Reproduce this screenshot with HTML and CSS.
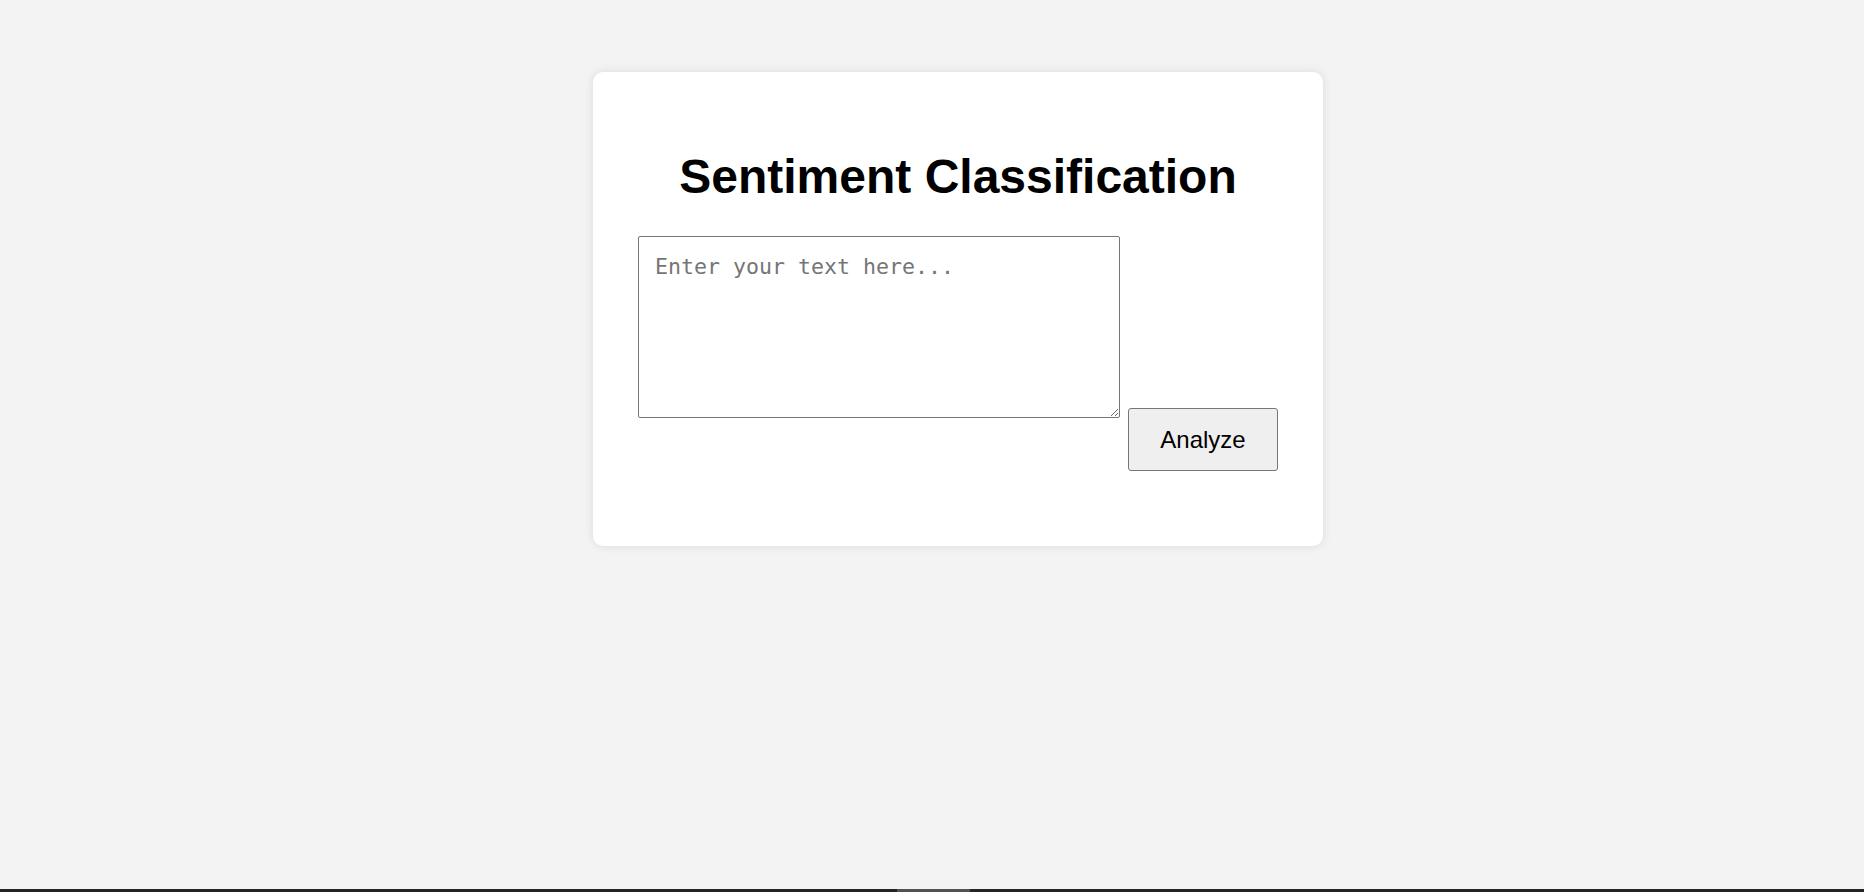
FILE: index.html
```html
<!DOCTYPE html>
<html lang="en">
<head>
<meta charset="utf-8">
<title>Sentiment Classification</title>
<link rel="stylesheet" href="styles.css">
</head>
<body>
<main class="page">
  <section class="card">
    <h1 class="title">Sentiment Classification</h1>
    <form class="form-row">
      <textarea class="text-input" placeholder="Enter your text here..."></textarea>
      <button type="button" class="analyze-btn">Analyze</button>
    </form>
  </section>
</main>
<div class="taskbar-edge"><span class="taskbar-seg"></span></div>
</body>
</html>
```
FILE: styles.css
```css
html, body {
  margin: 0;
  padding: 0;
  height: 100%;
}

body {
  background: #f3f3f3;
  font-family: "Liberation Sans", Arial, sans-serif;
  display: flex;
  flex-direction: column;
  overflow: hidden;
}

.page {
  flex: 1;
  display: flex;
  justify-content: center;
  align-items: flex-start;
  padding: 72px 0 0 52px;
}

.card {
  box-sizing: border-box;
  width: 730px;
  height: 474px;
  background: #ffffff;
  border-radius: 10px;
  box-shadow: 0 0 10px rgba(0, 0, 0, 0.1);
  padding: 40px 40px 0;
  display: flex;
  flex-direction: column;
  align-items: center;
}

.title {
  margin: 37px 0 32px;
  font-size: 48px;
  font-weight: bold;
  line-height: 55px;
  color: #000;
  text-align: center;
}

.form-row {
  margin: 0;
  display: flex;
  align-items: flex-start;
  gap: 8px;
}

.text-input {
  box-sizing: border-box;
  width: 482px;
  height: 182px;
  padding: 17px 16px 16px;
  border: 1px solid #767676;
  border-radius: 2px;
  font-family: "DejaVu Sans Mono", monospace;
  font-size: 21.6px;
  color: #000;
  background: #fff;
  resize: both;
}

.text-input::placeholder {
  color: #757575;
}

.analyze-btn {
  box-sizing: border-box;
  margin-top: 172px;
  width: 150px;
  height: 63px;
  padding: 0;
  background: #efefef;
  border: 1px solid #767676;
  border-radius: 3px;
  font-family: "Liberation Sans", Arial, sans-serif;
  font-size: 24px;
  color: #000;
}

.taskbar-edge {
  height: 3px;
  background: #232423;
  display: flex;
  padding-left: 897px;
}

.taskbar-seg {
  width: 73px;
  background: #525252;
}
```
